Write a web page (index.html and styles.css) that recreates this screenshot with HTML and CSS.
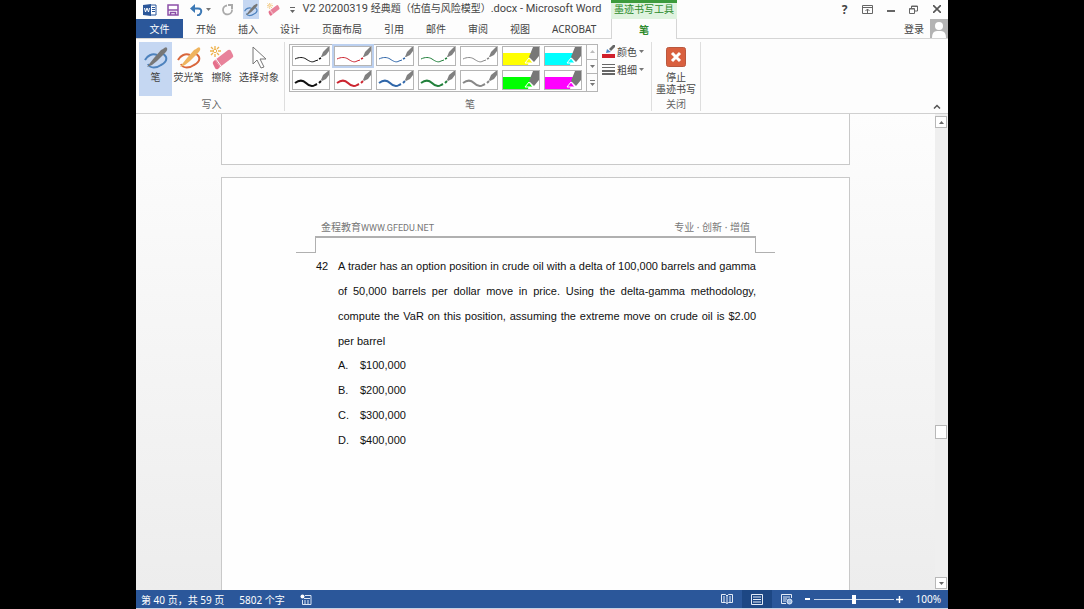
FILE: index.html
```html
<!DOCTYPE html>
<html lang="zh-CN">
<head>
<meta charset="utf-8">
<title>V2 20200319 经典题（估值与风险模型）.docx - Microsoft Word</title>
<link rel="stylesheet" href="styles.css">
</head>
<body>
<svg class="defs" aria-hidden="true">
  <symbol id="thin" viewBox="0 0 36 18">
    <path d="M2 12c4-2 8-2 11 0s6 4 9 2l3-1" fill="none" stroke="currentColor" stroke-width="1"/>
    <path d="M26 12l2-1" stroke="currentColor" stroke-width="1.500"/>
    <path d="M28 10l2-5 5-5h1v4l-3 4-4 2z" fill="#808080"/>
  </symbol>
  <symbol id="thick" viewBox="0 0 36 18">
    <path d="M2 12c4-3 8-3 11 0s6 4 9 2l2-1" fill="none" stroke="currentColor" stroke-width="2"/>
    <path d="M26 12l2-2" stroke="currentColor" stroke-width="2"/>
    <path d="M28 9l2-5 5-4h1v4l-3 4-4 2z" fill="#808080"/>
  </symbol>
  <symbol id="marker" viewBox="0 0 36 18">
    <path d="M0 6h28l-3 12H0z" fill="currentColor"/>
    <path d="M22 16l4-5 4 5z" fill="currentColor" stroke="#fff"/>
    <path d="M26 10l4-10h6v9l-5 6z" fill="#777"/>
  </symbol>
  <symbol id="pen" viewBox="0 0 24 24">
    <path d="M1 14C3 10 8 7 13 9M4 18c2 5 9 4 13 1 4-2 6-5 5-8-1-2-2-3-4-3" fill="none" stroke="currentColor" stroke-width="2"/>
    <path d="M3 21l3-4 4-5 7-8 2-1q3-3 4-1t-2 5L13 15l-5 4z" fill="var(--barrel, #777)"/>
  </symbol>
  <symbol id="rubber" viewBox="0 0 24 24">
    <path d="M5 14L18 4q2-1 3 1l2 4q1 2-1 3L10 21z" fill="#e8829a"/>
    <path d="M5 14l5 7-2 2q-2 1-3-1l-2-4q-1-2 2-4z" fill="#e56f8b"/>
    <path d="M6 13l5 7" stroke="#fff"/>
  </symbol>
  <symbol id="spark" viewBox="0 0 24 24">
    <path d="M5 0v3M5 8v3M0 5h3M8 5h3M1 1l2 2M7 7l2 2M9 1L7 3M3 7L1 9" stroke="#eeb24c" stroke-width="1.300"/>
    <circle cx="5" cy="5" r="1.700" fill="none" stroke="#eeb24c"/>
  </symbol>
  <symbol id="down" viewBox="0 0 5 3"><path d="M0 0h5L2.500 3z" fill="currentColor"/></symbol>
  <symbol id="up" viewBox="0 0 5 3"><path d="M0 3h5L2.500 0z" fill="currentColor"/></symbol>
  <symbol id="more" viewBox="0 0 5 6"><path d="M0 0h5v1H0zM0 3h5L2.500 6z" fill="currentColor"/></symbol>
</svg>

<div class="app">
  <header class="top">
    <div class="titlebar">
      <button class="word" aria-label="Word"><svg width="14" height="12" viewBox="0 0 14 12"><path d="M7 1h6v10H7z" fill="#fff" stroke="#2b579a"/><path d="M9 3.500h3M9 5.500h3M9 7.500h3" stroke="#2b579a"/><path d="M0 1l8-1v12l-8-1z" fill="#2b579a"/><path d="M1.500 4l1 4 1.500-4 1.500 4 1-4" fill="none" stroke="#fff"/></svg></button>
      <button class="save" aria-label="保存"><svg width="12" height="12" viewBox="0 0 12 12"><path d="M1 1h10v10H1z" fill="#fff" stroke="#8c4fa8" stroke-width="1.500"/><path d="M1 6h10M3.500 11V8.500h5V11" fill="none" stroke="#8c4fa8" stroke-width="1.500"/></svg></button>
      <button class="undo" aria-label="撤销"><svg width="13" height="12" viewBox="0 0 13 12"><path d="M2 4.500h6q4 0 3 4-1 3-4 3" fill="none" stroke="#3b78b5" stroke-width="2"/><path d="M0 4.500L5 0v9z" fill="#3b78b5"/></svg><svg class="caret" width="5" height="3"><use href="#down"/></svg></button>
      <button class="redo" aria-label="重复"><svg width="12" height="12" viewBox="0 0 12 12"><path d="M5 1.500a4.500 4.500 0 1 0 5 4" fill="none" stroke="#aaa" stroke-width="1.800"/><path d="M6 0h5v5H9V2H6z" fill="#aaa"/></svg></button>
      <button class="quickpen" aria-label="笔"><svg class="blue" width="14" height="14"><use href="#pen"/></svg></button>
      <button class="quickeraser" aria-label="擦除"><svg width="13" height="13"><use href="#rubber"/><use href="#spark"/></svg></button>
      <button class="quickmore" aria-label="自定义"><svg width="5" height="6"><use href="#more"/></svg></button>
      <h1 class="title">V2 20200319 <span class="zh">经典题（估值与风险模型）</span>.docx - Microsoft Word</h1>
    </div>
    <div class="context">墨迹书写工具</div>
    <div class="window">
      <button class="help" aria-label="帮助">?</button>
      <button aria-label="功能区显示选项"><svg width="11" height="9" viewBox="0 0 11 9" fill="none" stroke="#666"><path d="M.5.5h10v8H.5zM.5 2.500h10M5.500 8V4M3.500 6l2-2 2 2"/></svg></button>
      <button aria-label="最小化"><svg width="8" height="9"><path d="M0 5h8v2H0z" fill="#666"/></svg></button>
      <button aria-label="还原"><svg width="9" height="9" viewBox="0 0 9 9" fill="none" stroke="#666"><path d="M.5 3.500h5v5h-5zM.5 4h5M2.500 3V1h6v5h-3M2.500 1.500h6"/></svg></button>
      <button aria-label="关闭"><svg width="8" height="8" viewBox="0 0 8 8"><path d="M0 0l8 8M8 0L0 8" stroke="#555" stroke-width="1.600"/></svg></button>
    </div>
    <nav class="tabs">
      <button class="file">文件</button>
      <button>开始</button><button>插入</button><button>设计</button><button>页面布局</button><button>引用</button><button>邮件</button><button>审阅</button><button>视图</button><button>ACROBAT</button>
    </nav>
    <button class="activetab">笔</button>
    <div class="account">
      <a href="#">登录</a>
      <svg width="18" height="19" viewBox="0 0 18 19"><path d="M0 0h18v19H0z" fill="#b4b4b4"/><circle cx="9" cy="7" r="4" fill="#fff"/><path d="M2 19q0-7 5-7h4q5 0 5 7z" fill="#fff"/></svg>
    </div>
  </header>

  <section class="ribbon">
    <div class="group write">
      <div class="tools">
        <button class="tool on"><svg class="blue" width="24" height="24"><use href="#pen"/></svg>笔</button>
        <button class="tool"><svg class="orange" width="24" height="24"><use href="#pen"/></svg>荧光笔</button>
        <button class="tool"><svg width="24" height="24"><use href="#rubber"/><use href="#spark"/></svg>擦除</button>
        <button class="tool wide"><svg width="24" height="24" viewBox="0 0 24 24"><path d="M6 1v17l4-4 4 8 3-1-4-8h6z" fill="#fff" stroke="#777"/></svg>选择对象</button>
      </div>
      <div class="caption">写入</div>
    </div>
    <div class="group pens">
      <div class="tools">
        <div class="gallery">
          <div class="swatches">
            <button class="black" aria-label="黑色细笔"><svg><use href="#thin"/></svg></button>
            <button class="red chosen" aria-label="红色细笔"><svg><use href="#thin"/></svg></button>
            <button class="navy" aria-label="蓝色细笔"><svg><use href="#thin"/></svg></button>
            <button class="green" aria-label="绿色细笔"><svg><use href="#thin"/></svg></button>
            <button class="gray" aria-label="灰色细笔"><svg><use href="#thin"/></svg></button>
            <button class="yellow" aria-label="黄色荧光笔"><svg><use href="#marker"/></svg></button>
            <button class="cyan" aria-label="青色荧光笔"><svg><use href="#marker"/></svg></button>
            <button class="black" aria-label="黑色粗笔"><svg><use href="#thick"/></svg></button>
            <button class="red" aria-label="红色粗笔"><svg><use href="#thick"/></svg></button>
            <button class="navy" aria-label="蓝色粗笔"><svg><use href="#thick"/></svg></button>
            <button class="green" aria-label="绿色粗笔"><svg><use href="#thick"/></svg></button>
            <button class="gray" aria-label="灰色粗笔"><svg><use href="#thick"/></svg></button>
            <button class="lime" aria-label="绿色荧光笔"><svg><use href="#marker"/></svg></button>
            <button class="magenta" aria-label="洋红荧光笔"><svg><use href="#marker"/></svg></button>
          </div>
          <div class="steps">
            <button class="dim" aria-label="上一行"><svg width="5" height="3"><use href="#up"/></svg></button>
            <button aria-label="下一行"><svg width="5" height="3"><use href="#down"/></svg></button>
            <button aria-label="更多"><svg width="5" height="6"><use href="#more"/></svg></button>
          </div>
        </div>
        <div class="options">
          <button><svg width="14" height="13" viewBox="0 0 14 13"><path d="M0 9h13v4H0z" fill="#d0202c"/><path d="M4 8l1-4 4 3z" fill="#4a86c5"/><path d="M7 4l4-4h2v2L9 6z" fill="#666"/></svg>颜色<svg class="caret" width="5" height="3"><use href="#down"/></svg></button>
          <button><svg width="14" height="11" viewBox="0 0 14 11"><path d="M0 0h13v1H0zM0 3h13v1H0zM0 6h13v2H0zM0 9h13v2H0z" fill="#666"/></svg>粗细<svg class="caret" width="5" height="3"><use href="#down"/></svg></button>
        </div>
      </div>
      <div class="caption">笔</div>
    </div>
    <div class="group stop">
      <div class="tools">
        <button class="tool"><svg width="20" height="24" viewBox="0 0 20 24"><rect x=".5" y="1.500" width="19" height="19" rx="2" fill="#d9603f" stroke="#b9583f"/><path d="M6 7l8 8M14 7l-8 8" stroke="#fff" stroke-width="3"/></svg>停止<br>墨迹书写</button>
      </div>
      <div class="caption">关闭</div>
    </div>
    <button class="collapse" aria-label="折叠功能区"><svg width="8" height="5" viewBox="0 0 8 5"><path d="M1 4.500l3-3 3 3" fill="none" stroke="#555" stroke-width="1.500"/></svg></button>
  </section>

  <main class="workspace">
    <div class="canvas">
      <div class="page previous"></div>
      <article class="page current">
        <div class="pagehead"><span>金程教育<span class="site">WWW.GFEDU.NET</span></span><span class="motto">专业 · 创新 · 增值</span></div>
        <div class="marks"><i class="left"></i><i class="right"></i></div>
        <div class="question">
          <span>42</span>
          <div>
            <p>A trader has an option position in crude oil with a delta of 100,000 barrels and gamma of 50,000 barrels per dollar move in price. Using the delta-gamma methodology, compute the VaR on this position, assuming the extreme move on crude oil is $2.00 per barrel</p>
            <ul>
              <li><span>A.</span>$100,000</li>
              <li><span>B.</span>$200,000</li>
              <li><span>C.</span>$300,000</li>
              <li><span>D.</span>$400,000</li>
            </ul>
          </div>
        </div>
      </article>
    </div>
    <div class="scroll">
      <button aria-label="向上滚动"><svg width="5" height="3"><use href="#up"/></svg></button>
      <div class="before"></div>
      <div class="thumb"></div>
      <div class="after"></div>
      <button aria-label="向下滚动"><svg width="5" height="3"><use href="#down"/></svg></button>
    </div>
  </main>

  <footer class="status">
    <span class="pages">第 40 页，共 59 页</span>
    <span class="count">5802 个字</span>
    <svg width="12" height="11" viewBox="0 0 12 11"><circle cx="2.500" cy="2.500" r="2" fill="#fff"/><path d="M5 1.500h6v9H2.500V6M4 4.500h6M4 7h2M7 7h2M4 9h2M7 9h2" fill="none" stroke="#dce6f5"/></svg>
    <div class="views">
      <button aria-label="阅读视图"><svg width="12" height="10" viewBox="0 0 12 10" fill="none" stroke="#e4ecf8"><path d="M6 1.500v8M.5.5h4L6 2 7.500.5h4v8h-4L6 9.500 4.500 8.500h-4zM2 3h2M2 5h2M2 7h2M8 3h2M8 5h2M8 7h2"/></svg></button>
      <button class="on" aria-label="页面视图"><svg width="12" height="11" viewBox="0 0 12 11" fill="none" stroke="#e4ecf8"><path d="M.5.5h11v10H.5zM2 3h8M2 5.500h8M2 8h8"/></svg></button>
      <button aria-label="Web 版式视图"><svg width="12" height="11" viewBox="0 0 12 11" fill="none" stroke="#e4ecf8"><path d="M5 9.500H.5v-9h10V4M2 3h7M2 5h4M2 7h3"/><circle cx="8.500" cy="7.500" r="2.500" fill="#9dbbe4"/></svg></button>
    </div>
    <button class="zoombtn" aria-label="缩小"><svg width="5" height="6"><path d="M0 2h5v2H0z" fill="#fff"/></svg></button>
    <input type="range" min="0" max="100" value="50" aria-label="显示比例">
    <button class="zoombtn" aria-label="放大"><svg width="7" height="7"><path d="M0 3h3V0h1v3h3v1H4v3H3V4H0z" fill="#fff" stroke="#fff" stroke-width=".5"/></svg></button>
    <span class="percent">100%</span>
  </footer>
</div>
</body>
</html>
```

FILE: styles.css
```css
* { box-sizing: border-box; }

body {
  margin: 0;
  background: #000;
  display: grid;
  grid-template-columns: 136fr 812fr 136fr;
  font-family: "Noto Sans", "Noto Sans CJK SC", sans-serif;
  font-size: 10px;
  color: #444;
}

button {
  margin: 0;
  padding: 0;
  border: 0;
  background: none;
  font: inherit;
  color: inherit;
  display: flex;
  align-items: center;
  justify-content: center;
}

svg { display: block; flex: none; }
.defs { position: absolute; width: 0; height: 0; }
.caret { color: #777; }
.blue { color: #4d82bd; }
.orange { color: #d9673c; --barrel: #efb45e; }

.app {
  grid-column: 2;
  height: 100vh;
  display: flex;
  flex-direction: column;
  background: #fdfdfd;
  overflow: hidden;
}

/* Title bar and tabs */
.top {
  display: grid;
  grid-template-columns: 475px 66px 1fr;
  grid-template-rows: 19px 20px;
}
.titlebar { display: flex; padding-left: 2px; }
.word { width: 24px; }
.save { width: 22px; }
.undo { width: 32px; gap: 3px; }
.redo { width: 24px; }
.quickpen { width: 16px; margin: 0 3px; background: #c5d7f2; }
.quickeraser { width: 23px; }
.quickmore { width: 14px; color: #666; }
.title {
  flex: 1;
  margin: 0;
  padding-right: 6px;
  font-family: Roboto, "Noto Sans CJK SC", sans-serif;
  font-size: 11px;
  font-weight: 400;
  line-height: 18px;
  text-align: center;
  white-space: nowrap;
}
.zh { font-size: 10px; }
.context {
  border-top: 3px solid #3c9b3c;
  background: #dff3df;
  color: #2c8a2c;
  line-height: 13px;
  text-align: center;
}
.window { display: flex; justify-content: flex-end; }
.window button { width: 23px; height: 18px; }
.window .help { font-size: 12px; font-weight: 700; }
.tabs { display: flex; border-bottom: 1px solid #d5d5d5; }
.tabs button { padding: 0 11px; }
.tabs .file { width: 47px; margin-right: 2px; background: #2b579a; color: #fff; }
.activetab { border: 1px solid #d5d5d5; border-width: 0 1px; color: #2c8a2c; font-weight: 700; }
.account {
  display: flex;
  align-items: center;
  justify-content: flex-end;
  gap: 6px;
  border-bottom: 1px solid #d5d5d5;
}
.account a { color: #444; text-decoration: none; }

/* Ribbon */
.ribbon { display: flex; height: 75px; border-bottom: 1px solid #d0d0d0; }
.group {
  display: flex;
  flex-direction: column;
  justify-content: space-between;
  margin: 3px 0 2px;
  border-right: 1px solid #dedede;
}
.tools { display: flex; }
.caption { line-height: 14px; text-align: center; color: #666; }
.write { width: 149px; padding-left: 3px; }
.tool {
  flex-direction: column;
  justify-content: flex-start;
  width: 33px;
  height: 54px;
  padding-top: 4px;
  line-height: 12px;
  white-space: nowrap;
}
.tool svg { margin-bottom: 1px; }
.tool.on { background: #c5d7f2; }
.tool.wide { width: 42px; }
.pens { width: 367px; padding-left: 4px; }
.gallery { display: flex; height: 48px; margin-top: 2px; border: 1px solid #b5b5b5; }
.swatches {
  display: grid;
  grid-template-columns: repeat(7, 38px);
  grid-template-rows: repeat(2, 20px);
  gap: 4px;
  padding: 1px 4px 1px 2px;
}
.swatches button { border: 1px solid #b5b5b5; background: #fff; }
.swatches svg { width: 36px; height: 18px; }
.swatches .chosen { outline: 2px solid #bcd0ef; }
.black { color: #111; }
.red { color: #cc2530; }
.navy { color: #2f66a9; }
.green { color: #21803b; }
.gray { color: #888; }
.yellow { color: #ff0; }
.cyan { color: #0ff; }
.lime { color: #0f0; }
.magenta { color: #f0f; }
.steps { display: grid; width: 11px; border-left: 1px solid #b5b5b5; color: #777; }
.steps .dim { color: #bbb; }
.steps button + button { border-top: 1px solid #b5b5b5; }
.options { padding: 0 0 0 4px; }
.options button { height: 18px; gap: 1px; }
.options .caret { margin-left: 1px; }
.stop { width: 49px; }
.stop .tool { width: 48px; }
.collapse { align-self: flex-end; margin-left: auto; width: 23px; height: 14px; }

/* Document */
.workspace { flex: 1; min-height: 0; display: flex; }
.canvas {
  flex: 1;
  padding: 0 85px;
  display: flex;
  flex-direction: column;
  gap: 12px;
  overflow: hidden;
  background: linear-gradient(#fdfdfd, #ededed);
}
.page { border: 1px solid #c9c9c9; background: #fefefe; }
.previous { flex: none; height: 51px; border-top: 0; }
.current { flex: 1; border-bottom: 0; padding: 42px 93px 0; }
.pagehead {
  display: flex;
  justify-content: space-between;
  padding: 0 6px;
  line-height: 15px;
  border-bottom: 2px solid #b0b0b0;
  color: #777;
}
.site { font-family: Roboto, sans-serif; font-size: 9px; }
.marks { display: flex; justify-content: space-between; margin: 0 -19px; height: 15px; }
.marks i { width: 20px; border: 0 solid #b0b0b0; border-bottom-width: 1px; }
.marks .left { border-right-width: 1px; }
.marks .right { border-left-width: 1px; }
.question {
  display: grid;
  grid-template-columns: 22px 1fr;
  padding: 1px 0 0 1px;
  font-family: "Liberation Sans", Arial, sans-serif;
  font-size: 11px;
  line-height: 25px;
  color: #111;
}
.question p { margin: 0; text-align: justify; }
.question ul { margin: -1px 0 0; padding: 0; list-style: none; }
.question li { display: flex; }
.question li span { width: 22px; }

.scroll {
  width: 13px;
  display: flex;
  flex-direction: column;
  padding: 2px 1px 1px 0;
  background: #efefef;
}
.scroll button, .thumb { height: 12px; border: 1px solid #b8b8b8; background: #fff; color: #666; }
.thumb { height: 14px; }
.before { flex: 298; }
.after { flex: 139; }

/* Status bar */
.status {
  display: flex;
  align-items: center;
  height: 19px;
  padding: 0 7px 0 5px;
  background: #2b579a;
  border-bottom: 1px solid #c9d3e4;
  color: #fff;
}
.count { margin: 0 15px; }
.views { display: flex; align-self: stretch; margin-left: auto; }
.views button { width: 30px; }
.views .on { background: #1d4784; }
.zoombtn { width: 12px; height: 18px; }
.status input {
  appearance: none;
  width: 80px;
  height: 9px;
  margin: 0;
  background: linear-gradient(#c9d6ea, #c9d6ea) center / 100% 1px no-repeat;
}
.status input::-webkit-slider-thumb { appearance: none; width: 4px; height: 9px; background: #fff; }
.percent { margin-left: 10px; }
```
